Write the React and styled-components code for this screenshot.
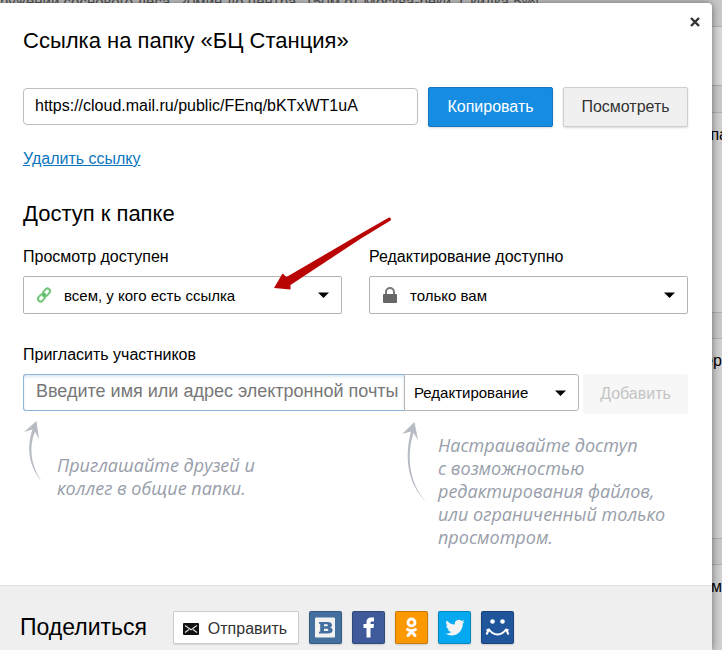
import React from 'react';
import styled, { createGlobalStyle } from 'styled-components';

const GlobalStyle = createGlobalStyle`
  * {
    box-sizing: border-box;
  }

  body {
    margin: 0;
    background: #c9c9c9;
    color: #000;
    font-family: 'Liberation Sans', Arial, sans-serif;
    font-size: 16px;
    line-height: 20px;
  }

  button,
  input,
  select {
    font-family: inherit;
  }
`;

const Page = styled.div`
  display: grid;
  grid-template-columns: minmax(0, 1fr);
  height: 100vh;
  overflow: hidden;
`;

const Feed = styled.div`
  grid-area: 1 / 1;
  display: flex;
  flex-direction: column;
  min-width: 0;
  height: 100vh;
  overflow: hidden;
`;

const FeedText = styled.div`
  flex: none;
  height: 26px;
  white-space: nowrap;
  color: #555;
`;

/* scrolled half out of view */
const FeedTitle = styled.p`
  display: flex;
  align-items: flex-end;
  height: 12px;
  margin: 0;
  font-size: 15px;
`;

const FeedPanel = styled.div`
  flex: none;
  height: 60px;
  border-top: 1px solid #b2b2b2;
  border-bottom: 1px solid #ababab;
  background: #d8d8d8;
`;

const FeedItem = styled.div`
  flex: none;
  height: 226px;
  padding-top: 26px;
`;

const FeedBody = styled.div`
  display: flex;
  justify-content: flex-end;
  height: 201px;
  padding-top: 12px;
  margin-right: ${({ $overhang }) => ($overhang ? '-6px' : '0')};
  border-top: 1px solid #b0b0b0;
  border-bottom: 1px solid #b0b0b0;
  background: #d1d1d1;
`;

const Dialog = styled.section`
  grid-area: 1 / 1;
  display: flex;
  flex-direction: column;
  z-index: 1;
  margin: 3px 10px 0 0;
  border-top-right-radius: 4px;
  background: #fff;
  box-shadow: 0 0 8px rgba(0, 0, 0, 0.5);
`;

const DialogBody = styled.div`
  position: relative;
  flex: none;
  padding: 24px 24px 36px 23px;
`;

const CloseButton = styled.button`
  position: absolute;
  top: 12px;
  right: 10px;
  width: 14px;
  height: 14px;
  padding: 2px;
  border: 0;
  background: none;
  cursor: pointer;

  svg {
    display: block;
  }
`;

const Title = styled.h1`
  margin: 0 0 32px;
  font-size: 22px;
  font-weight: 400;
  line-height: 28px;
`;

const Heading = styled.h2`
  margin: 0;
  font-size: 22px;
  font-weight: 400;
  line-height: 28px;
`;

const LinkRow = styled.div`
  display: flex;
  align-items: flex-start;
  gap: 10px;
`;

const LinkInput = styled.input`
  flex: 1;
  min-width: 0;
  height: 37px;
  margin-top: 1px;
  padding: 0 11px 2px;
  border: 1px solid #bebebe;
  border-radius: 4px;
  font-size: 16px;
  color: #000;
`;

const Button = styled.button`
  flex: none;
  width: ${({ $width }) => $width || 125}px;
  height: 40px;
  padding: 0;
  border: 1px solid ${({ $primary }) => ($primary ? '#1577c4' : '#cfcfcf')};
  border-radius: 2px;
  background: ${({ $primary }) => ($primary ? '#168de2' : '#f0f0f0')};
  box-shadow: 0 1px 2px rgba(0, 0, 0, 0.15);
  color: ${({ $primary }) => ($primary ? '#fff' : '#333')};
  font-size: 16px;
  cursor: pointer;

  &:disabled {
    border-color: #f7f7f7;
    background: #f7f7f7;
    box-shadow: none;
    color: #c4c4c4;
  }
`;

const RemoveLink = styled.a`
  display: inline-block;
  margin: 22px 0 31px;
  color: #0b76bf;
`;

const AccessRow = styled.div`
  display: grid;
  grid-template-columns: 1fr 1fr;
  gap: 27px;
  margin: 19px 0 31px;
`;

const Label = styled.label`
  display: block;
  margin-bottom: 9px;
`;

const SelectBox = styled.div`
  display: grid;
  grid-template-columns: 40px 1fr 36px;
  align-items: center;
  height: 38px;
  border: 1px solid #b4b4b4;
  border-radius: 2px;
  background: #fff;

  > * {
    grid-row: 1;
  }

  > svg {
    grid-column: 1;
    justify-self: center;
    pointer-events: none;
  }

  > svg:last-child {
    grid-column: 3;
  }
`;

const Select = styled.select`
  grid-column: 1 / -1;
  width: 100%;
  height: 100%;
  padding: 0 36px 0 ${({ $pad }) => $pad}px;
  border: 0;
  appearance: none;
  background: none;
  color: #000;
  font-size: 15px;
`;

const InviteRow = styled.div`
  display: flex;
  align-items: flex-start;
`;

const InviteInput = styled.input`
  flex: 1;
  min-width: 0;
  height: 37px;
  padding: 0 2px 2px 12px;
  border: 1px solid #8cb4dc;
  border-right: 0;
  border-radius: 3px 0 0 3px;
  box-shadow: inset 0 2px 3px #dce9f5;
  font-size: 18px;

  &::placeholder {
    color: #777;
    opacity: 1;
  }
`;

const RoleBox = styled(SelectBox)`
  flex: none;
  width: 175px;
  height: 37px;
  margin-right: 4px;
  border-radius: 0 3px 3px 0;
`;

const Hints = styled.div`
  display: grid;
  grid-template-columns: 379px 1fr;
  margin-top: 6px;
`;

const Hint = styled.div`
  display: flex;
  gap: ${({ $gap }) => $gap}px;

  svg {
    flex: none;
  }
`;

const HintText = styled.p`
  margin: ${({ $top }) => $top}px 0 0;
  color: #989eaa;
  font-family: 'Segoe Print', 'Open Sans', sans-serif;
  font-size: 18px;
  font-style: italic;
  line-height: 23px;
  white-space: nowrap;
`;

const Footer = styled.footer`
  display: flex;
  flex: 1;
  align-items: flex-start;
  padding: 25px 24px 0 20px;
  border-top: 1px solid #e0e0e0;
  background: #efefef;
`;

const FooterHeading = styled(Heading)`
  margin: 2px 26px 0 0;
  font-size: 23px;
`;

const SendButton = styled.button`
  display: flex;
  align-items: center;
  justify-content: center;
  gap: 9px;
  width: 126px;
  height: 33px;
  margin-right: 10px;
  padding: 2px 2px 0 0;
  border: 1px solid #ccc;
  border-radius: 2px;
  background: #fff;
  box-shadow: 0 1px 1px rgba(0, 0, 0, 0.1);
  color: #333;
  font-size: 16px;
  cursor: pointer;
`;

const Socials = styled.div`
  display: flex;
  gap: 10px;
`;

const SocialLink = styled.a`
  display: block;
  width: 33px;
  height: 33px;
  border: 1px solid rgba(0, 0, 0, 0.2);
  border-radius: 2px;
  background: ${({ $color }) => $color};
  box-shadow: 0 1px 2px rgba(0, 0, 0, 0.15);

  svg {
    display: block;
  }
`;

const RedArrow = styled.svg`
  position: absolute;
  top: 213px;
  left: 272px;
  pointer-events: none;
`;

const Caret = () => (
  <svg width="11" height="6" viewBox="0 0 11 6">
    <path d="M0 0.5h11L5.5 6z" fill="#000" />
  </svg>
);

const ChainIcon = () => (
  <svg width="16" height="16" viewBox="0 0 16 16" fill="none" stroke="#73c77a" strokeWidth="2">
    <rect x="-4" y="-2.6" width="8" height="5.2" rx="2.6" transform="translate(10.5 5.2) rotate(-50)" />
    <rect x="-4" y="-2.6" width="8" height="5.2" rx="2.6" transform="translate(5.5 10.8) rotate(-50)" />
    <path d="M6.5 9.5l3-3.2" stroke="#5ab964" />
  </svg>
);

const LockIcon = () => (
  <svg width="14" height="16" viewBox="0 0 14 16">
    <path d="M3 8V5a4 4 0 0 1 8 0v3" fill="none" stroke="#777" strokeWidth="2" />
    <rect y="7" width="14" height="9" rx="1" fill="#666" />
  </svg>
);

const InviteArrow = () => (
  <svg width="26" height="64" viewBox="0 0 26 64">
    <path d="M13.5 1L16 19.5 12 11.5C6 26 7 44 18.500 61.500C4.500 44 4 26 9.500 9.500L1 12z" fill="#b7bbc4" />
  </svg>
);

const RoleArrow = () => (
  <svg width="26" height="84" viewBox="0 0 26 84">
    <path d="M12.5 2L16 20 11.5 13C5 32 5.5 63 25 82.5C3.5 63 3 34 9 11.5L0 14z" fill="#b7bbc4" />
  </svg>
);

const EnvelopeIcon = () => (
  <svg width="16" height="12" viewBox="0 0 16 12">
    <rect width="16" height="12" rx="1" fill="#111" />
    <path d="M2 2.5l6 4.2 6-4.2M2 9.5l4-3M14 9.5l-4-3" fill="none" stroke="#ddd" strokeWidth="1.2" />
  </svg>
);

const socials = [
  {
    name: 'ВКонтакте',
    color: '#44709f',
    icon: (
      <>
        <rect x="5" y="5.5" width="20" height="20" rx="1" fill="#f2f2f2" />
        <path
          fillRule="evenodd"
          fill="#44709f"
          d="M9 10h8.200c3 0 4.800 1 4.800 3 0 1.300-.8 2.100-2 2.500 1.700.3 2.600 1.300 2.600 2.700 0 2.300-2 3.300-5 3.300H9v-1.800h1.200v-7.900H9zM14 12.300v2h2.200c1.200 0 1.700-.3 1.700-1s-.5-1-1.700-1zM14 16.700v2.400h2.500c1.300 0 1.900-.4 1.900-1.200s-.6-1.200-1.900-1.200z"
        />
      </>
    ),
  },
  {
    name: 'Facebook',
    color: '#3f5a9b',
    icon: (
      <path
        fill="#fff"
        d="M13.5 25.5V16H10.5V12H13.5V10C13.5 7 15.3 5.5 18 5.5H21V9.5H19C17.9 9.5 17.5 10 17.5 11V12H21L20.5 16H17.5V25.5z"
      />
    ),
  },
  {
    name: 'Одноклассники',
    color: '#fc9802',
    icon: (
      <g fill="none" stroke="#fff" strokeLinecap="round">
        <circle cx="15.5" cy="10.5" r="3.500" strokeWidth="2.800" />
        <path d="M11.5 17.5c2.500 1.500 5.500 1.500 8 0M15.5 19.500l-3.500 4M15.5 19.500l3.500 4" strokeWidth="3" />
      </g>
    ),
  },
  {
    name: 'Twitter',
    color: '#06a9ef',
    icon: (
      <path
        fill="#f4f4f4"
        transform="translate(6.5 6) scale(.8)"
        d="M23.950 4.570a10 10 0 0 1-2.820.77 4.960 4.960 0 0 0 2.160-2.720c-.95.55-2 .95-3.130 1.180a4.920 4.920 0 0 0-8.380 4.480C7.690 8.100 4.070 6.130 1.640 3.160a4.900 4.900 0 0 0 1.520 6.570 4.900 4.900 0 0 1-2.230-.61v.06a4.920 4.920 0 0 0 3.950 4.830 5 5 0 0 1-2.210.08 4.930 4.930 0 0 0 4.600 3.420A9.870 9.870 0 0 1 0 19.540a13.990 13.990 0 0 0 7.550 2.210c9.050 0 14-7.500 14-13.980 0-.21 0-.42-.02-.63a9.940 9.940 0 0 0 2.420-2.570z"
      />
    ),
  },
  {
    name: 'Мой Мир',
    color: '#1f569b',
    icon: (
      <>
        <circle cx="10.5" cy="9.5" r="2.300" fill="#fff" />
        <circle cx="20.5" cy="9.5" r="2.300" fill="#fff" />
        <path
          d="M4.5 22.5L7 17.5c4.500 6.500 12.500 6.500 17 0l2.500 5M4.5 18.500L7 17.5M26.5 18.500L24 17.5"
          fill="none"
          stroke="#fff"
          strokeWidth="2"
          strokeLinejoin="round"
        />
      </>
    ),
  },
];

const App = () => {
  return (
    <>
      <GlobalStyle />
      <Page>
        <Feed>
          <FeedText>
            <FeedTitle>
              ружений соснового леса, 20мин до центра, 150м от Москва-реки. Скидка 5%!
            </FeedTitle>
          </FeedText>
          <FeedPanel />
          <FeedItem>
            <FeedBody $overhang>па</FeedBody>
          </FeedItem>
          <FeedItem>
            <FeedBody>ер</FeedBody>
          </FeedItem>
          <FeedItem>
            <FeedBody>м</FeedBody>
          </FeedItem>
        </Feed>

        <Dialog role="dialog" aria-labelledby="dialog-title">
          <DialogBody>
            <CloseButton aria-label="Закрыть">
              <svg width="10" height="10" viewBox="0 0 10 10">
                <path d="M1 1l8 8M9 1l-8 8" stroke="#333" strokeWidth="2.4" />
              </svg>
            </CloseButton>

            <Title id="dialog-title">Ссылка на папку «БЦ Станция»</Title>

            <LinkRow>
              <LinkInput
                aria-label="Ссылка"
                readOnly
                value="https://cloud.mail.ru/public/FEnq/bKTxWT1uA"
              />
              <Button $primary>Копировать</Button>
              <Button>Посмотреть</Button>
            </LinkRow>

            <RemoveLink href="#remove">Удалить ссылку</RemoveLink>

            <Heading>Доступ к папке</Heading>

            <AccessRow>
              <div>
                <Label htmlFor="view">Просмотр доступен</Label>
                <SelectBox>
                  <ChainIcon />
                  <Select id="view" $pad={40}>
                    <option>всем, у кого есть ссылка</option>
                  </Select>
                  <Caret />
                </SelectBox>
              </div>
              <div>
                <Label htmlFor="edit">Редактирование доступно</Label>
                <SelectBox>
                  <LockIcon />
                  <Select id="edit" $pad={40}>
                    <option>только вам</option>
                  </Select>
                  <Caret />
                </SelectBox>
              </div>
            </AccessRow>

            <Label htmlFor="invite">Пригласить участников</Label>
            <InviteRow>
              <InviteInput id="invite" placeholder="Введите имя или адрес электронной почты" />
              <RoleBox>
                <Select aria-label="Права" $pad={9}>
                  <option>Редактирование</option>
                </Select>
                <Caret />
              </RoleBox>
              <Button $width={105} disabled>
                Добавить
              </Button>
            </InviteRow>

            <Hints>
              <Hint $gap={8}>
                <InviteArrow />
                <HintText $top={34}>
                  Приглашайте друзей и
                  <br />
                  коллег в общие папки.
                </HintText>
              </Hint>
              <Hint $gap={10}>
                <RoleArrow />
                <HintText $top={14}>
                  Настраивайте доступ
                  <br />
                  с возможностью
                  <br />
                  редактирования файлов,
                  <br />
                  или ограниченный только
                  <br />
                  просмотром.
                </HintText>
              </Hint>
            </Hints>

            <RedArrow width="122" height="80" viewBox="0 0 122 80">
              <path
                fill="#b90504"
                d="M117 1.5a1.8 1.8 0 0 1 1.5 3L89 22.5 18.5 69 18.5 73.5 2 72 10.5 57.5 14.5 61 89 17.5z"
              />
            </RedArrow>
          </DialogBody>

          <Footer>
            <FooterHeading>Поделиться</FooterHeading>
            <SendButton>
              <EnvelopeIcon />
              Отправить
            </SendButton>
            <Socials>
              {socials.map(({ name, color, icon }) => (
                <SocialLink key={name} href="#share" aria-label={name} $color={color}>
                  <svg width="31" height="31" viewBox="0 0 31 31">
                    {icon}
                  </svg>
                </SocialLink>
              ))}
            </Socials>
          </Footer>
        </Dialog>
      </Page>
    </>
  );
};

export default App;
